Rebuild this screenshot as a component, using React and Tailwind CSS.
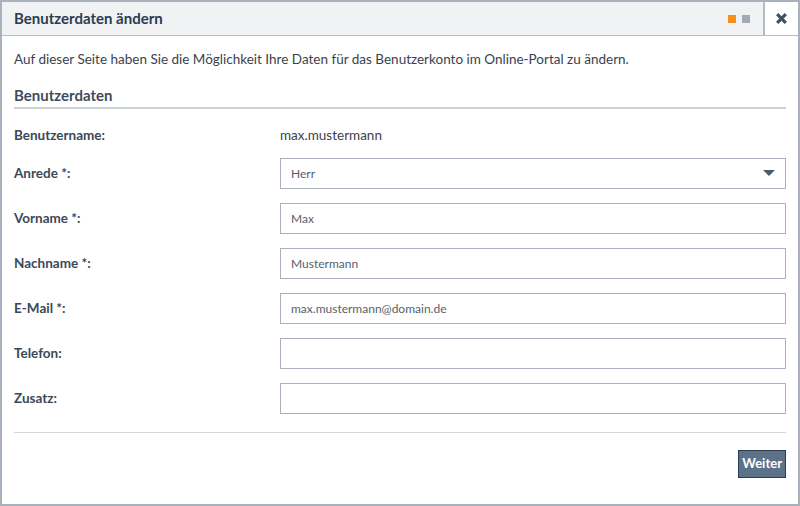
import React from "react";

const rows = [
  { label: "Anrede *:", value: "Herr", select: true },
  { label: "Vorname *:", value: "Max" },
  { label: "Nachname *:", value: "Mustermann" },
  { label: "E-Mail *:", value: "max.mustermann@domain.de" },
  { label: "Telefon:", value: "" },
  { label: "Zusatz:", value: "" },
];

export default function App() {
  return (
    <div
      className="w-[800px] h-[506px] bg-white border-2 border-[#a9b2bc] flex flex-col text-[#333f4c]"
      style={{ fontFamily: "Lato, 'Liberation Sans', sans-serif" }}
    >
      <div className="h-[34px] flex items-stretch bg-[#f1f2f4] border-b border-[#b4bcc5] shrink-0">
        <div className="flex-1 flex items-center pl-3 pb-[1px] text-[15px] font-bold text-[#2b3c50]">
          Benutzerdaten ändern
        </div>
        <div className="flex items-center gap-[6px] pr-[13px]">
          <span className="w-[8px] h-[8px] bg-[#f7901e]" />
          <span className="w-[8px] h-[8px] bg-[#a2abb5]" />
        </div>
        <div className="w-[35px] bg-white border-l-2 border-[#b4bcc5] flex items-center justify-center">
          <svg width="13" height="13" viewBox="0 0 12 12">
            <path d="M2 2 L10 10 M10 2 L2 10" stroke="#3f5166" strokeWidth="3" strokeLinecap="butt" />
          </svg>
        </div>
      </div>
      <div className="flex-1 flex flex-col px-3">
        <p className="mt-[13px] text-[13.5px] leading-[20px] text-[#39434e]">
          Auf dieser Seite haben Sie die Möglichkeit Ihre Daten für das Benutzerkonto im Online-Portal zu ändern.
        </p>
        <div className="mt-[16px] leading-[20px] pb-[2px] border-b-2 border-[#cdd2d8] text-[15px] font-bold text-[#3d4c5e]">
          Benutzerdaten
        </div>
        <div className="mt-[16px] flex items-center h-[20px] text-[13.5px]">
          <div className="w-[266px] font-bold text-[#3b4858]">Benutzername:</div>
          <div className="text-[#39434e]">max.mustermann</div>
        </div>
        <div className="mt-[13px] flex flex-col gap-[14px]">
          {rows.map((r) => (
            <div key={r.label} className="flex items-center">
              <div className="w-[266px] text-[13.5px] font-bold text-[#3b4858]">{r.label}</div>
              <div className="flex-1 h-[31px] border border-[#a9b2bc] flex items-center px-[10px] text-[12px] text-[#56616d]">
                <span className="flex-1">{r.value}</span>
                {r.select && (
                  <svg width="12" height="7" viewBox="0 0 12 7">
                    <path d="M0 0 H12 L6 6 Z" fill="#4a5a6c" />
                  </svg>
                )}
              </div>
            </div>
          ))}
        </div>
        <div className="mt-[18px] border-t border-[#d5d9de]" />
        <div className="mt-[17px] flex justify-end">
          <button className="h-[28px] px-[3px] bg-[#5d7189] border border-[#2a3d52] text-white text-[13px] font-bold">
            Weiter
          </button>
        </div>
      </div>
    </div>
  );
}
